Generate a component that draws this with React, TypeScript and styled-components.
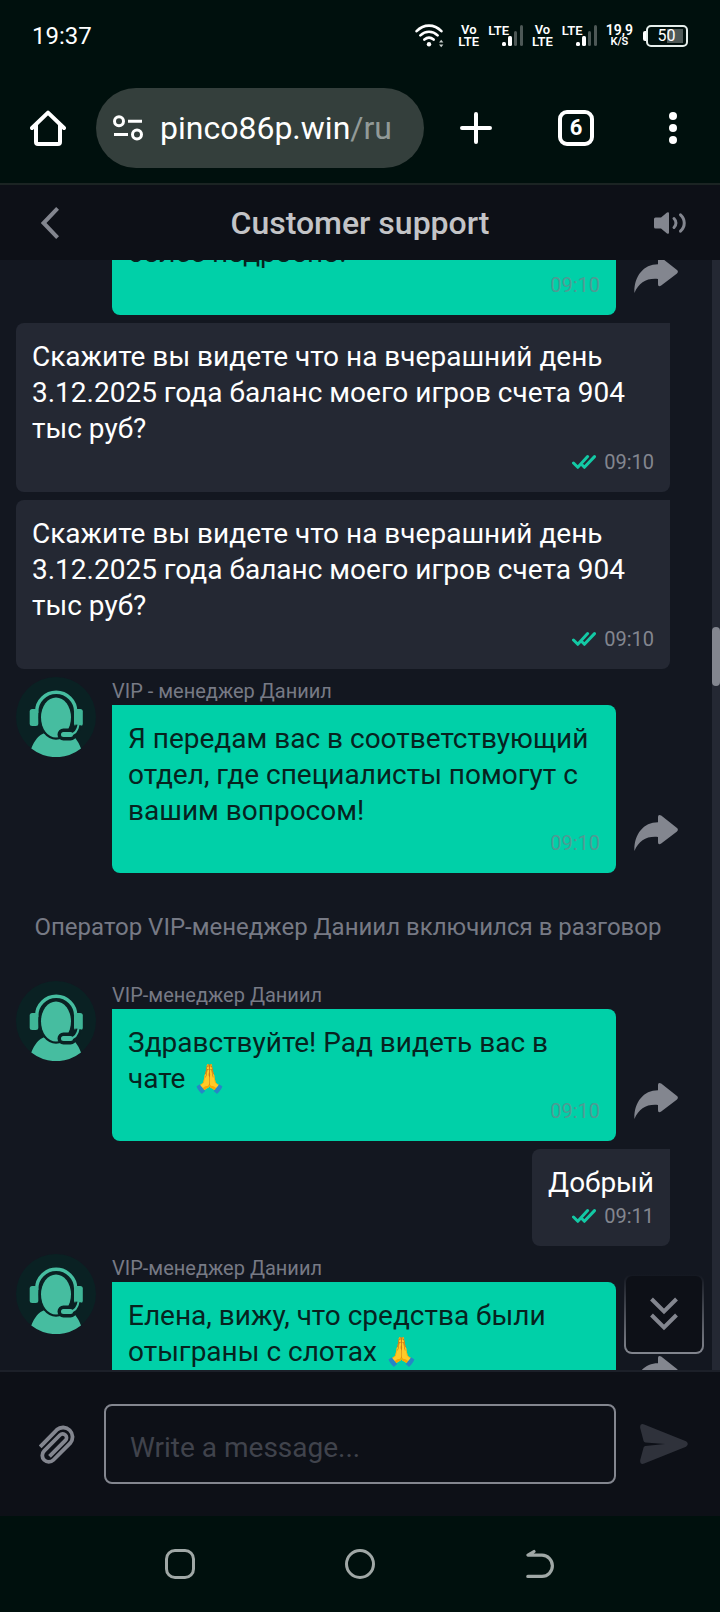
import React, { useLayoutEffect, useRef } from "react";
import styled, { createGlobalStyle, css } from "styled-components";

const GlobalStyle = createGlobalStyle`
  *, *::before, *::after { box-sizing: border-box; }
  body { margin: 0; background: #00100d; font-family: Roboto, "Liberation Sans", sans-serif; }
  button { border: 0; padding: 0; background: none; color: inherit; font: inherit; cursor: pointer; }
  svg { display: block; flex: none; }
`;

const Screen = styled.div`
  display: flex;
  flex-direction: column;
  height: 100vh;
  background: #131720;
  overflow: hidden;
`;

/* ---------- phone status bar ---------- */

const StatusBar = styled.div`
  flex: none;
  display: flex;
  align-items: center;
  justify-content: space-between;
  height: 72px;
  padding: 0 32px;
  background: #00100d;
  color: #fff;
`;

const Clock = styled.time`
  font-size: 24px;
  line-height: 28px;
`;

const Indicators = styled.div`
  display: flex;
  align-items: center;
`;

const Stack = styled.span<{ $left: number }>`
  display: flex;
  flex-direction: column;
  align-items: center;
  margin-left: ${(p) => p.$left}px;
  font-size: 13px;
  font-weight: 600;
  line-height: 12px;
`;

const Speed = styled(Stack)`
  font-size: 14px;
  small {
    font-size: 11px;
  }
`;

const Signal = styled.span`
  display: flex;
  margin-left: 9px;
  font-size: 13px;
  font-weight: 600;
  line-height: 12px;
  svg {
    margin-left: -7px;
  }
`;

const Battery = styled.span`
  display: flex;
  align-items: center;
  margin-left: 10px;
  &::before {
    content: "";
    width: 3px;
    height: 10px;
    border-radius: 2px 0 0 2px;
    background: #fff;
  }
`;

const BatteryCell = styled.span`
  width: 42px;
  height: 22px;
  padding-right: 1px;
  border: 2px solid #e6efec;
  border-radius: 5px;
  background: linear-gradient(#4d5856, #4d5856) 19px 2px / 16px 14px no-repeat;
  font-size: 16px;
  line-height: 18px;
  text-align: center;
`;

/* ---------- browser toolbar ---------- */

const Toolbar = styled.div`
  flex: none;
  display: flex;
  align-items: center;
  height: 113px;
  border-bottom: 2px solid #1b2423;
  background: #00100d;
  color: #fff;
`;

const ToolButton = styled.button<{ $width: number }>`
  flex: none;
  display: flex;
  align-items: center;
  justify-content: center;
  width: ${(p) => p.$width}px;
  height: 80px;
`;

const AddressBar = styled.button`
  flex: 1;
  display: flex;
  align-items: center;
  gap: 16px;
  min-width: 0;
  height: 80px;
  margin-right: 2px;
  padding: 0 16px;
  border-radius: 40px;
  background: #343f3c;
  font-size: 32px;
  line-height: 40px;
  white-space: nowrap;
`;

const UrlPath = styled.span`
  color: #929a98;
`;

const TabCount = styled.span`
  width: 36px;
  height: 36px;
  border: 4px solid #fff;
  border-radius: 9px;
  font-size: 22px;
  font-weight: 700;
  line-height: 28px;
  text-align: center;
`;

/* ---------- support chat ---------- */

const ChatHeader = styled.header`
  flex: none;
  display: flex;
  align-items: center;
  height: 75px;
  background: #0d1017;
  color: #83868f;
`;

const HeaderButton = styled(ToolButton)`
  height: 74px;
`;

const Title = styled.h1`
  flex: 1;
  margin: 0;
  color: #c3c4c7;
  font-size: 32px;
  font-weight: 500;
  line-height: 36px;
  text-align: center;
`;

const ChatArea = styled.main`
  position: relative;
  flex: 1;
  display: flex;
  min-height: 0;
`;

const Messages = styled.div`
  flex: 1;
  min-width: 0;
  display: flex;
  flex-direction: column;
  gap: 8px;
  overflow-y: auto;
  scrollbar-width: none;
`;

const Track = styled.div`
  flex: none;
  width: 8px;
  background: #242833;
`;

const Thumb = styled.div`
  height: 59px;
  margin-top: 367px;
  border-radius: 4px;
  background: #83868f;
`;

const AgentRow = styled.div`
  flex: none;
  display: flex;
  align-items: flex-start;
  padding: 0 16px;
`;

const AvatarSlot = styled.div`
  flex: none;
  width: 96px;
`;

const AgentColumn = styled.div`
  flex: 1;
  min-width: 0;
`;

const AgentName = styled.div`
  height: 28px;
  color: #777a85;
  font-size: 20px;
  line-height: 28px;
`;

const UserRow = styled.div`
  flex: none;
  display: flex;
  justify-content: flex-end;
  padding: 0 42px 0 16px;
`;

const Bubble = styled.div<{ $mine?: boolean }>`
  padding: 16px;
  font-size: 28px;
  line-height: 36px;
  ${(p) =>
    p.$mine
      ? css`
          border-radius: 8px 0 8px 8px;
          background: #242833;
          color: #fff;
        `
      : css`
          border-radius: 0 8px 8px 8px;
          background: #00d0a8;
          color: #07231f;
        `}
`;

const BubbleText = styled.p`
  margin: 0;
`;

const Meta = styled.div<{ $mine?: boolean }>`
  display: flex;
  align-items: center;
  justify-content: flex-end;
  gap: 8px;
  height: ${(p) => (p.$mine ? 29 : 28)}px;
  color: ${(p) => (p.$mine ? "#83868f" : "#4f9a93")};
  font-size: 20px;
  line-height: 28px;
`;

const ShareButton = styled.button`
  flex: none;
  align-self: flex-end;
  display: flex;
  justify-content: center;
  width: 80px;
  padding-bottom: 22px;
  color: #83868f;
`;

const Notice = styled.p`
  flex: none;
  margin: 0;
  padding: 32px 40px 32px 24px;
  color: #777a85;
  font-size: 24px;
  line-height: 28px;
  text-align: center;
`;

const JumpButton = styled.button`
  position: absolute;
  right: 16px;
  bottom: 16px;
  width: 80px;
  height: 80px;
  display: flex;
  align-items: center;
  justify-content: center;
  border: 2px solid transparent;
  border-radius: 8px;
  background:
    linear-gradient(#0d1017, #0d1017) padding-box,
    linear-gradient(#131720, #83868f) border-box;
  color: #83868f;
`;

const Composer = styled.form`
  flex: none;
  display: flex;
  align-items: center;
  padding: 32px 8px 32px 0;
  border-top: 2px solid #1c2029;
  background: #0d1017;
`;

const AttachButton = styled(ToolButton)`
  padding-left: 10px;
  color: #83868f;
`;

const SendButton = styled(ToolButton)`
  color: #2f323b;
`;

const MessageInput = styled.input`
  flex: 1;
  min-width: 0;
  height: 80px;
  padding: 6px 24px 0;
  border: 2px solid #83868f;
  border-radius: 8px;
  background: transparent;
  color: #fff;
  font: 28px Roboto, "Liberation Sans", sans-serif;
  outline: none;
  &::placeholder {
    color: #40434c;
    opacity: 1;
  }
`;

/* ---------- phone navigation ---------- */

const NavBar = styled.nav`
  flex: none;
  display: flex;
  justify-content: center;
  height: 96px;
  background: #00100d;
  color: #a0a8a6;
`;

const NavButton = styled.button`
  width: 25%;
  display: flex;
  align-items: center;
  justify-content: center;
`;

/* ---------- drawings ---------- */

const WifiIcon = () => (
  <svg width="30" height="24" viewBox="0 0 30 24" fill="none" stroke="#fff" strokeWidth="2.6" strokeLinecap="round">
    <path d="M1.6 7.2C8.8-.2 19.2-.2 26.4 7.2M5.4 11.4c5-4.8 12.2-4.8 17.2 0M9.4 15.6c2.8-2.4 6.4-2.4 9.2 0" />
    <circle cx="14" cy="20.3" r="2.2" fill="#fff" stroke="none" />
    <path d="m24 18.4 2.2-2.6 2.2 2.6zM24 20.6l2.2 2.6 2.2-2.6z" fill="#c9d0ce" stroke="none" />
  </svg>
);

const BarsIcon = () => (
  <svg width="22" height="22" viewBox="0 0 22 22" fill="#fff">
    <rect x="0" y="17" width="4" height="4" rx="1.5" />
    <rect x="6" y="11" width="4" height="10" rx="1.5" />
    <rect x="12" y="6" width="3" height="15" rx="1.5" fill="#4d5856" />
    <rect x="18" y="0" width="3" height="21" rx="1.5" fill="#4d5856" />
  </svg>
);

const HomeIcon = () => (
  <svg width="36" height="36" viewBox="0 0 36 36" fill="none" stroke="#fff" strokeWidth="4" strokeLinecap="round" strokeLinejoin="round">
    <path d="M2 18 18 2.6 34 18M6 15v17q0 2 2 2h20q2 0 2-2V15" />
  </svg>
);

const SiteSettingsIcon = () => (
  <svg width="32" height="28" viewBox="0 0 32 28" fill="none" stroke="#fff" strokeWidth="3">
    <circle cx="7" cy="7.3" r="4.5" />
    <path d="M16 7.3h14M2 20.5h14" />
    <circle cx="25" cy="20.5" r="4.5" />
  </svg>
);

const PlusIcon = () => (
  <svg width="32" height="32" viewBox="0 0 32 32" stroke="#fff" strokeWidth="4" strokeLinecap="round">
    <path d="M16 2v28M2 16h28" />
  </svg>
);

const DotsIcon = () => (
  <svg width="8" height="32" viewBox="0 0 8 32" fill="#fff">
    <circle cx="4" cy="4" r="4" />
    <circle cx="4" cy="16" r="4" />
    <circle cx="4" cy="28" r="4" />
  </svg>
);

const BackIcon = () => (
  <svg width="18" height="32" viewBox="0 0 18 32" fill="none" stroke="currentColor" strokeWidth="4">
    <path d="M16.6 1.4 2.6 16l14 14.6" />
  </svg>
);

const SoundIcon = () => (
  <svg width="32" height="22" viewBox="0 0 32 22" fill="none" stroke="currentColor" strokeWidth="3" strokeLinecap="round">
    <path d="M1.5 5.5H7L13 .5Q15 -.5 15 1.5V20.500Q15 22.500 13 21.500L7 16.500H1.500Q0 16.500 0 15V7Q0 5.500 1.500 5.500z" fill="currentColor" stroke="none" />
    <path d="M20 6.500c2.600 2.600 2.600 6.400 0 9M26.500 2.800c5 4.600 5 11.800 0 16.400" />
  </svg>
);

const ShareIcon = () => (
  <svg width="44" height="36" viewBox="0 0 44 36" fill="currentColor">
    <path d="M.4 36C-.2 20 9 7.300 24 7.300V2Q24-.9 27.200.6L43 13q1.800 1.700 0 3.400L27.200 28.600Q24 30.200 24 27.200V22C12.500 21 5 25.500.4 36z" />
  </svg>
);

const TicksIcon = () => (
  <svg width="24" height="14" viewBox="0 0 24 14" fill="none" stroke="#13c9a5" strokeWidth="3" strokeLinecap="round" strokeLinejoin="round">
    <path d="M1.500 8 5.800 12.300 15.600 1.600M9.400 9.300l3 3L22.500 1.600" />
  </svg>
);

const DoubleChevronIcon = () => (
  <svg width="28" height="34" viewBox="0 0 28 34" fill="none" stroke="currentColor" strokeWidth="4">
    <path d="m1.500 2 12.500 12.500L26.500 2M1.500 18 14 30.500 26.500 18" />
  </svg>
);

const ClipIcon = () => (
  <svg width="36" height="40" viewBox="0 0 36 40" fill="none" stroke="currentColor" strokeWidth="3.800">
    <path d="M1.200 22.800 17.800 5.800A9.500 9.500 0 0 1 31.200 19.200L14.400 36A6.500 6.500 0 0 1 5.200 26.800L21 11A3.800 3.800 0 0 1 26.400 16.400L10.500 32.300" />
  </svg>
);

const SendIcon = () => (
  <svg width="48" height="40" viewBox="0 0 48 40" fill="currentColor">
    <path d="M.2 4Q-.3-1 4.200.4L46 17.300q3.600 2.700 0 5.400L4.200 39.600Q-.3 41 .2 36L3.600 23.500Q4 22.200 5.400 22L25 20 5.400 18.400Q4 18.300 3.600 17z" />
  </svg>
);

const RecentsIcon = () => (
  <svg width="30" height="30" viewBox="0 0 30 30" fill="none" stroke="currentColor" strokeWidth="3">
    <rect x="1.500" y="1.500" width="27" height="27" rx="8.500" />
  </svg>
);

const CircleIcon = () => (
  <svg width="30" height="30" viewBox="0 0 30 30" fill="none" stroke="currentColor" strokeWidth="3">
    <circle cx="15" cy="15" r="13.500" />
  </svg>
);

const ReturnIcon = () => (
  <svg width="28" height="30" viewBox="0 0 28 30" fill="none" stroke="currentColor" strokeWidth="3.200" strokeLinecap="round" strokeLinejoin="round">
    <path d="M8 2.500 2 6.200H16a10.400 10.600 0 0 1 0 21.200H1.800" />
  </svg>
);

const Avatar = () => (
  <svg width="80" height="80" viewBox="0 0 80 80">
    <circle cx="40" cy="40" r="40" fill="#0a2123" />
    <path d="M20.700 36V34.500a19.300 19 0 0 1 39 0V36" fill="none" stroke="#46bda0" strokeWidth="3.400" />
    <rect x="13.700" y="32" width="8.600" height="17" rx="2.500" fill="#3fb597" />
    <rect x="58" y="32" width="8.800" height="17" rx="2.500" fill="#3fb597" />
    <path d="M15.300 71.500C18.500 63 23 58 28.500 56q11.500 9 23 0C57.500 58 62 63 65 71.500A40 40 0 0 1 15.300 71.500z" fill="#46bda0" />
    <ellipse cx="40" cy="40.500" rx="17.300" ry="22.300" fill="#0a2123" />
    <ellipse cx="40" cy="40.500" rx="15" ry="20" fill="#46bda0" />
    <path d="M62.500 48C61.500 54 59 57 54 57.500" fill="none" stroke="#0a2123" strokeWidth="6" />
    <rect x="43.500" y="53.500" width="15" height="8" rx="4" fill="none" stroke="#0a2123" strokeWidth="4" />
    <path d="M62.500 48C61.500 54 59 57 54 57.500" fill="none" stroke="#46bda0" strokeWidth="2" />
    <rect x="45" y="55" width="12" height="5" rx="2.500" fill="#46bda0" />
  </svg>
);

/* ---------- message rows ---------- */

function AgentMessage({ name, time, children }: { name?: string; time: string; children: React.ReactNode }) {
  return (
    <AgentRow>
      <AvatarSlot>{name && <Avatar />}</AvatarSlot>
      <AgentColumn>
        {name && <AgentName>{name}</AgentName>}
        <Bubble>
          <BubbleText>{children}</BubbleText>
          <Meta>
            <time>{time}</time>
          </Meta>
        </Bubble>
      </AgentColumn>
      <ShareButton type="button" aria-label="Share">
        <ShareIcon />
      </ShareButton>
    </AgentRow>
  );
}

function UserMessage({ time, children }: { time: string; children: React.ReactNode }) {
  return (
    <UserRow>
      <Bubble $mine>
        <BubbleText>{children}</BubbleText>
        <Meta $mine>
          <TicksIcon />
          <time>{time}</time>
        </Meta>
      </Bubble>
    </UserRow>
  );
}

const VoLte = ({ left }: { left: number }) => (
  <Stack $left={left}>
    <span>Vo</span>
    <span>LTE</span>
  </Stack>
);

const QUESTION = "Скажите вы видете что на вчерашний день 3.12.2025 года баланс моего игров счета 904 тыс руб?";

export default function App() {
  const messages = useRef<HTMLDivElement>(null);

  useLayoutEffect(() => {
    if (messages.current) messages.current.scrollTop = 41;
  }, []);

  return (
    <Screen>
      <GlobalStyle />
      <StatusBar>
        <Clock>19:37</Clock>
        <Indicators>
          <WifiIcon />
          <VoLte left={13} />
          <Signal>
            LTE
            <BarsIcon />
          </Signal>
          <VoLte left={8} />
          <Signal>
            LTE
            <BarsIcon />
          </Signal>
          <Speed $left={8}>
            <span>19,9</span>
            <small>K/S</small>
          </Speed>
          <Battery>
            <BatteryCell>50</BatteryCell>
          </Battery>
        </Indicators>
      </StatusBar>

      <Toolbar>
        <ToolButton $width={96} aria-label="Home">
          <HomeIcon />
        </ToolButton>
        <AddressBar>
          <SiteSettingsIcon />
          <span>
            pinco86p.win<UrlPath>/ru</UrlPath>
          </span>
        </AddressBar>
        <ToolButton $width={100} aria-label="New tab">
          <PlusIcon />
        </ToolButton>
        <ToolButton $width={100} aria-label="Tabs">
          <TabCount>6</TabCount>
        </ToolButton>
        <ToolButton $width={94} aria-label="Menu">
          <DotsIcon />
        </ToolButton>
      </Toolbar>

      <ChatHeader>
        <HeaderButton $width={100} aria-label="Back">
          <BackIcon />
        </HeaderButton>
        <Title>Customer support</Title>
        <HeaderButton $width={100} aria-label="Sound">
          <SoundIcon />
        </HeaderButton>
      </ChatHeader>

      <ChatArea>
        <Messages ref={messages}>
          <AgentMessage time="09:10">более подробно.</AgentMessage>
          <UserMessage time="09:10">{QUESTION}</UserMessage>
          <UserMessage time="09:10">{QUESTION}</UserMessage>
          <AgentMessage name="VIP - менеджер Даниил" time="09:10">
            Я передам вас в соответствующий отдел, где специалисты помогут с вашим вопросом!
          </AgentMessage>
          <Notice>Оператор VIP-менеджер Даниил включился в разговор</Notice>
          <AgentMessage name="VIP-менеджер Даниил" time="09:10">
            Здравствуйте! Рад видеть вас в чате 🙏
          </AgentMessage>
          <UserMessage time="09:11">Добрый</UserMessage>
          <AgentMessage name="VIP-менеджер Даниил" time="09:11">
            Елена, вижу, что средства были отыграны с слотах 🙏
          </AgentMessage>
        </Messages>
        <Track>
          <Thumb />
        </Track>
        <JumpButton type="button" aria-label="Scroll to latest">
          <DoubleChevronIcon />
        </JumpButton>
      </ChatArea>

      <Composer onSubmit={(e) => e.preventDefault()}>
        <AttachButton type="button" $width={104} aria-label="Attach file">
          <ClipIcon />
        </AttachButton>
        <MessageInput aria-label="Message" placeholder="Write a message..." />
        <SendButton type="submit" $width={96} aria-label="Send">
          <SendIcon />
        </SendButton>
      </Composer>

      <NavBar>
        <NavButton aria-label="Recent apps">
          <RecentsIcon />
        </NavButton>
        <NavButton aria-label="Home screen">
          <CircleIcon />
        </NavButton>
        <NavButton aria-label="Go back">
          <ReturnIcon />
        </NavButton>
      </NavBar>
    </Screen>
  );
}
